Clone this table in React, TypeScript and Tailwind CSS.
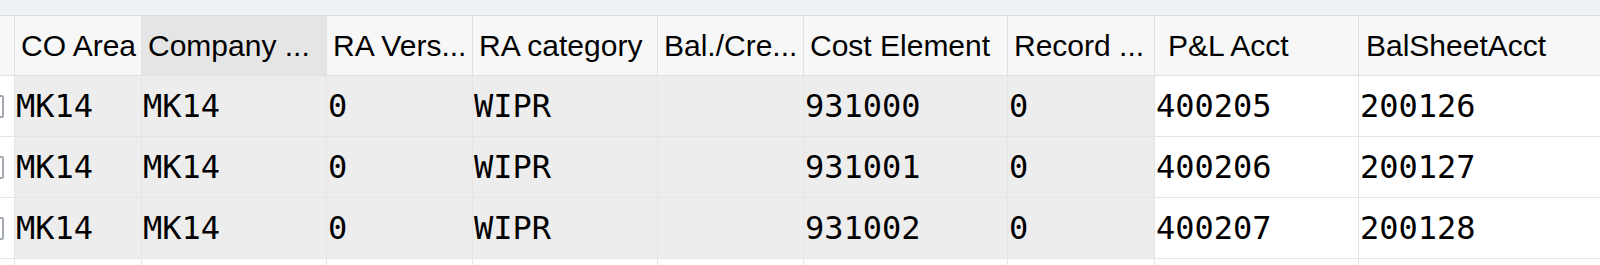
const cols = [
  { w: 'w-[127px]', head: 'CO Area', hpad: 'pl-[6px]', key: true },
  { w: 'w-[185px]', head: 'Company ...', hpad: 'pl-[6px]', key: true, sel: true },
  { w: 'w-[146px]', head: 'RA Vers...', hpad: 'pl-[6px]', key: true },
  { w: 'w-[185px]', head: 'RA category', hpad: 'pl-[6px]', key: true },
  { w: 'w-[146px]', head: 'Bal./Cre...', hpad: 'pl-[6px]', key: true },
  { w: 'w-[204px]', head: 'Cost Element', hpad: 'pl-[6px]', key: true },
  { w: 'w-[147px]', head: 'Record ...', hpad: 'pl-[6px]', key: true },
  { w: 'w-[204px]', head: 'P&L Acct', hpad: 'pl-[13px]', key: false },
  { w: 'w-[242px]', head: 'BalSheetAcct', hpad: 'pl-[7px]', key: false },
];

const rows = [
  ['MK14', 'MK14', '0', 'WIPR', '', '931000', '0', '400205', '200126'],
  ['MK14', 'MK14', '0', 'WIPR', '', '931001', '0', '400206', '200127'],
  ['MK14', 'MK14', '0', 'WIPR', '', '931002', '0', '400207', '200128'],
];

const sans = "font-['Liberation_Sans',Arial,sans-serif]";
const mono = "font-['DejaVu_Sans_Mono','Liberation_Mono',monospace]";

export default function App() {
  return (
    <div className="w-[1600px] h-[265px] overflow-hidden bg-white">
      <div className="h-[16px] bg-[#eef2f6] border-b border-[#d9dde1]" />

      {/* header */}
      <div className={`flex h-[60px] border-b border-[#e0e0e0] bg-[#f7f7f7] text-[30px] text-black ${sans}`}>
        <div className="w-[15px] shrink-0 border-r border-[#e0e0e0]" />
        {cols.map((c) => (
          <div
            key={c.head}
            className={`${c.w} shrink-0 flex items-center whitespace-nowrap overflow-hidden border-r border-[#e0e0e0] ${c.hpad} ${c.sel ? 'bg-[#e5e5e5]' : ''}`}
          >
            {c.head}
          </div>
        ))}
      </div>

      {/* rows */}
      {rows.map((r, i) => (
        <div key={i} className={`flex h-[61px] border-b border-[#e5e5e5] text-[32px] text-black ${mono}`}>
          <div className="w-[15px] shrink-0 flex items-center overflow-hidden border-r border-[#e5e5e5] bg-white">
            <div className="-ml-[20px] w-[24px] h-[23px] shrink-0 rounded-[2px] border-2 border-[#a3a9b0] bg-white" />
          </div>
          {cols.map((c, j) => (
            <div
              key={j}
              className={`${c.w} shrink-0 flex items-center pl-[1px] whitespace-nowrap border-r border-[#e5e5e5] ${c.key ? 'bg-[#ededed]' : 'bg-white'}`}
            >
              {r[j]}
            </div>
          ))}
        </div>
      ))}

      {/* empty row */}
      <div className="flex h-[61px]">
        <div className="w-[15px] shrink-0 border-r border-[#e5e5e5]" />
        {cols.map((c, j) => (
          <div key={j} className={`${c.w} shrink-0 border-r border-[#e5e5e5]`} />
        ))}
      </div>
    </div>
  );
}
